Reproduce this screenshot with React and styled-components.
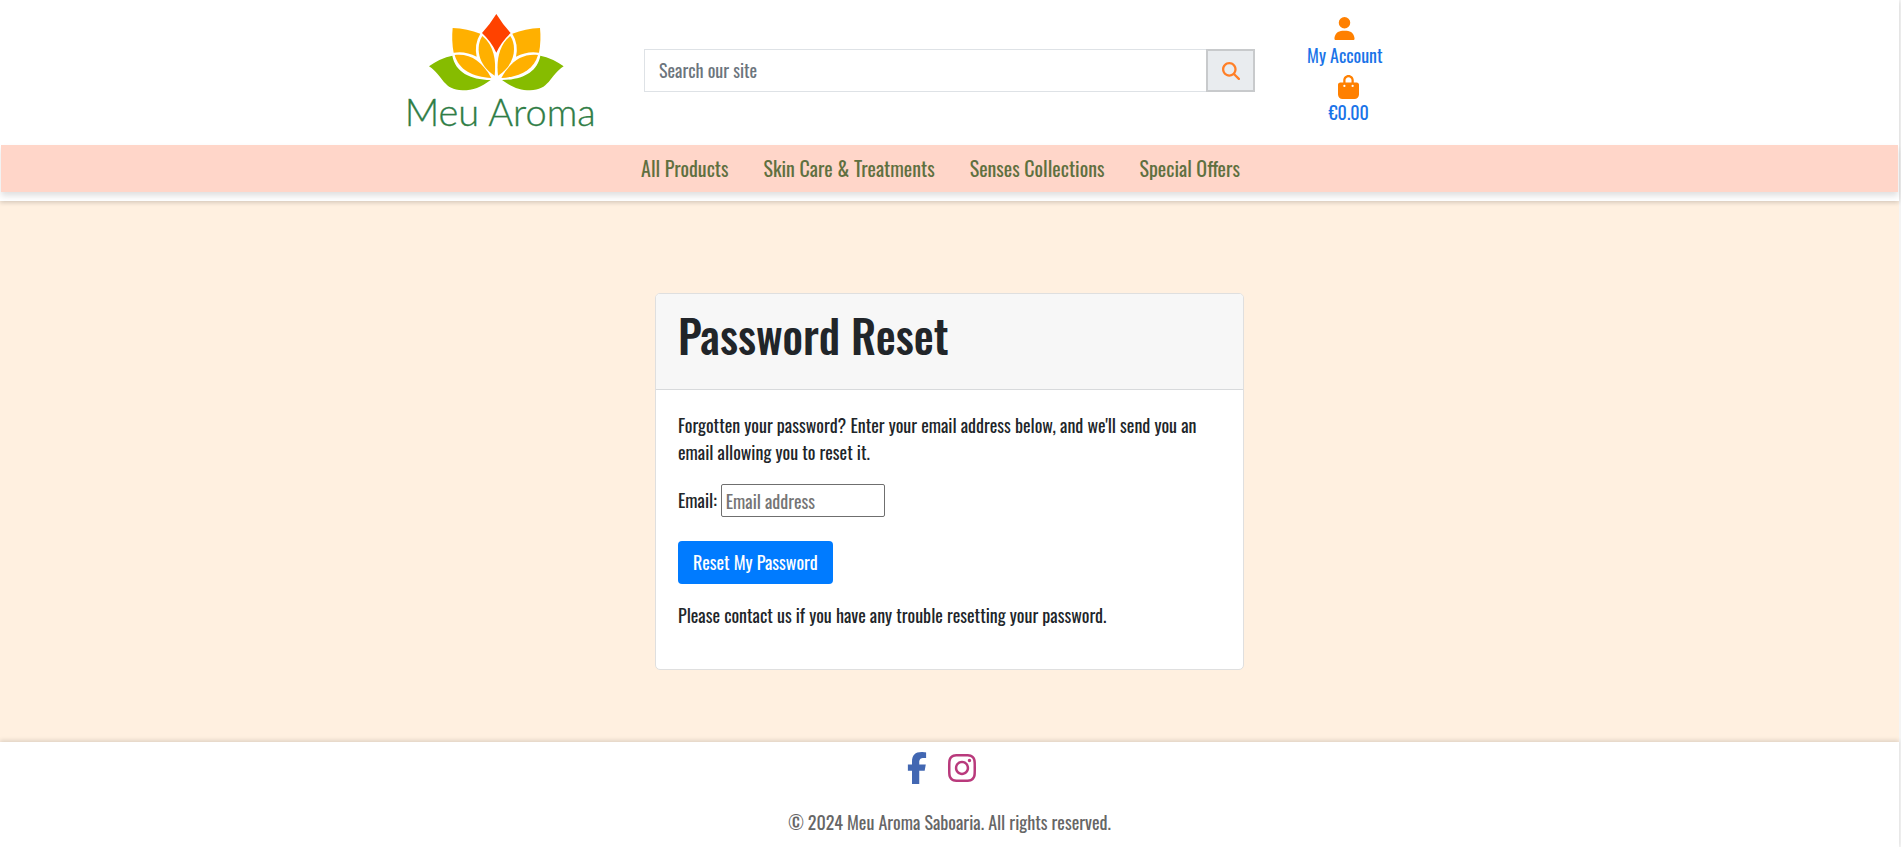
import React from "react";
import styled, { createGlobalStyle } from "styled-components";
import { FaUser, FaFacebookF, FaInstagram } from "react-icons/fa6";

const GlobalStyle = createGlobalStyle`
  *, *::before, *::after { box-sizing: border-box; }
  html { overflow-x: hidden; }
  body {
    margin: 0;
    background: #fff0e0;
    color: #212529;
    font-family: Oswald, "Liberation Sans Narrow", "Liberation Sans", sans-serif;
    font-size: 18px;
    line-height: 27px;
  }
  a { text-decoration: none; }
`;

const Page = styled.div`
  display: flex;
  flex-direction: column;
  min-height: 100vh;
  border-right: 2px solid #f4f4f4;
`;

const Header = styled.header`
  position: relative;
  padding-bottom: 9px;
  background: #fff;
  box-shadow: 0 2px 4px rgba(0, 0, 0, 0.15);
`;

const TopBar = styled.div`
  display: grid;
  grid-template-columns: repeat(3, 1fr);
  align-items: center;
  padding-bottom: 4px;
`;

const LogoLink = styled.a`
  display: block;
  justify-self: end;
  height: 141px;
  padding-right: 23px;
`;

const SearchForm = styled.form`
  display: flex;
  height: 43px;
  margin: 0 11px;
`;

const SearchInput = styled.input`
  flex: 1;
  min-width: 0;
  padding: 0 14px;
  border: 1px solid #dee2e6;
  border-right: 0;
  color: #212529;
  font: inherit;
  &::placeholder { color: #6c757d; opacity: 1; }
`;

const SearchButton = styled.button`
  display: flex;
  align-items: center;
  justify-content: center;
  width: 49px;
  padding: 0;
  border: 2px solid #c8cacc;
  background: #e9ecef;
  color: #ff7f27;
`;

const AccountLinks = styled.div`
  display: flex;
  flex-direction: column;
  align-items: center;
  justify-self: start;
  gap: 4px;
  padding: 2px 0 0 41px;
`;

const AccountLink = styled.a`
  display: flex;
  flex-direction: column;
  align-items: center;
  color: #1a73e8;
  line-height: ${(p) => (p.$tight ? "27px" : "31px")};
  padding-left: ${(p) => (p.$tight ? "8px" : "0")};
  svg { color: #ff8000; }
`;

const Nav = styled.nav`
  display: flex;
  justify-content: center;
  gap: 35px;
  height: 47px;
  margin: 0 1px;
  padding-right: 18px;
  background: #ffd6c9;
  box-shadow: 0 4px 6px rgba(0, 0, 0, 0.12);
`;

const NavLink = styled.a`
  color: #5f7040;
  font-size: 20px;
  line-height: 47px;
`;

const Main = styled.main`
  flex: 1;
  display: grid;
  grid-template-columns: repeat(3, 1fr);
  padding: 92px 0 72px;
`;

const Card = styled.section`
  grid-column: 2;
  align-self: start;
  margin: 0 22px;
  border: 1px solid #dfdfdf;
  border-radius: 5px;
  background: #fff;
  overflow: hidden;
`;

const CardHeader = styled.div`
  padding: 13px 22px 27px;
  border-bottom: 1px solid #d8dadc;
  background: #f7f7f7;
`;

const Title = styled.h1`
  margin: 0;
  font-size: 45px;
  font-weight: 500;
  line-height: 55px;
`;

const CardBody = styled.div`
  padding: 22px 22px 40px;
`;

const Paragraph = styled.p`
  margin: 0;
`;

const Field = styled.div`
  display: flex;
  align-items: center;
  gap: 4px;
  margin: 18px 0 24px;
`;

const EmailInput = styled.input`
  width: 164px;
  height: 33px;
  padding: 0 4px;
  border: 1px solid #6f6f6f;
  border-radius: 2px;
  font: inherit;
  &::placeholder { color: #757575; opacity: 1; }
`;

const SubmitButton = styled.button`
  display: block;
  height: 43px;
  margin-bottom: 18px;
  padding: 0 15px;
  border: 0;
  border-radius: 4px;
  background: #007bff;
  color: #fff;
  font: inherit;
`;

const Footer = styled.footer`
  display: flex;
  flex-direction: column;
  align-items: center;
  gap: 25px;
  padding: 9px 0 12px;
  background: #fff;
  box-shadow: 0 -2px 4px rgba(0, 0, 0, 0.12);
  color: #666;
`;

const Social = styled.div`
  display: flex;
  align-items: center;
  gap: 13px;
  height: 33px;
  padding-right: 20px;
`;

const SocialLink = styled.a`
  display: flex;
  color: ${(p) => p.$color};
`;

const HalfFlower = () => (
  <>
    <path fill="#ffb000" d="M188 84 Q232 86 271 101 Q252 132 260 170 Q226 152 191 158 Q184 122 188 84Z" />
    <path fill="#ffb000" d="M277 108 C257 138 261 194 314 227 C319 182 312 136 277 108Z" />
    <path fill="#ffb000" d="M194 165 C242 160 276 184 304 234 C248 230 207 211 194 165Z" />
    <path fill="#86bc00" d="M117 199 Q151 174 187 167 C196 216 240 239 302 240 C272 262 250 271 218 271 C160 271 160 228 117 199Z" />
  </>
);

const Logo = () => (
  <svg width="220" height="141" viewBox="0 0 660 423" role="img" aria-label="Meu Aroma">
    <path fill="#ff4200" d="M319 42 Q338 73 362 99 Q334 125 319 158 Q304 125 276 99 Q300 73 319 42Z" />
    <HalfFlower />
    <g transform="translate(638 0) scale(-1 1)"><HalfFlower /></g>
    <text x="44" y="377" fill="#2f7d46" stroke="#2f7d46" fontFamily="Lato, 'Open Sans', sans-serif" fontWeight="300" fontSize="114">Meu Aroma</text>
  </svg>
);

const BagIcon = () => (
  <svg width="21" height="24" viewBox="0 0 448 512" fill="currentColor" aria-hidden="true">
    <path d="M160 112c0-35.300 28.700-64 64-64s64 28.700 64 64v48H160V112zm-48 48H48c-26.500 0-48 21.500-48 48V416c0 53 43 96 96 96H352c53 0 96-43 96-96V208c0-26.500-21.500-48-48-48H336V112C336 50.100 285.900 0 224 0S112 50.100 112 112v48zm24 48a24 24 0 1 1 0 48 24 24 0 1 1 0-48zm152 24a24 24 0 1 1 48 0 24 24 0 1 1-48 0z" />
  </svg>
);

const SearchIcon = () => (
  <svg width="18" height="18" viewBox="0 0 512 512" fill="currentColor" aria-hidden="true">
    <path d="M416 208c0 45.900-14.900 88.300-40 122.700L502.600 457.400c12.500 12.500 12.500 32.800 0 45.300s-32.800 12.500-45.300 0L330.700 376c-34.400 25.200-76.800 40-122.700 40C93.100 416 0 322.900 0 208S93.100 0 208 0S416 93.100 416 208zM208 352a144 144 0 1 0 0-288 144 144 0 1 0 0 288z" />
  </svg>
);

const navItems = ["All Products", "Skin Care & Treatments", "Senses Collections", "Special Offers"];

export default function App() {
  return (
    <>
      <GlobalStyle />
      <Page>
        <Header>
          <TopBar>
            <LogoLink href="#"><Logo /></LogoLink>
            <SearchForm>
              <SearchInput type="text" placeholder="Search our site" aria-label="Search our site" />
              <SearchButton type="button" aria-label="Search"><SearchIcon /></SearchButton>
            </SearchForm>
            <AccountLinks>
              <AccountLink href="#"><FaUser size={23} />My Account</AccountLink>
              <AccountLink href="#" $tight><BagIcon />€0.00</AccountLink>
            </AccountLinks>
          </TopBar>
          <Nav>
            {navItems.map((item) => <NavLink key={item} href="#">{item}</NavLink>)}
          </Nav>
        </Header>
        <Main>
          <Card>
            <CardHeader><Title>Password Reset</Title></CardHeader>
            <CardBody>
              <Paragraph>
                Forgotten your password? Enter your email address below, and we'll send you an email allowing you to reset it.
              </Paragraph>
              <Field>
                <label htmlFor="email">Email:</label>
                <EmailInput id="email" type="email" placeholder="Email address" />
              </Field>
              <SubmitButton type="button">Reset My Password</SubmitButton>
              <Paragraph>Please contact us if you have any trouble resetting your password.</Paragraph>
            </CardBody>
          </Card>
        </Main>
        <Footer>
          <Social>
            <SocialLink href="#" $color="#4267b2" aria-label="Facebook"><FaFacebookF size={32} /></SocialLink>
            <SocialLink href="#" $color="#b93a7c" aria-label="Instagram"><FaInstagram size={32} /></SocialLink>
          </Social>
          <span>© 2024 Meu Aroma Saboaria. All rights reserved.</span>
        </Footer>
      </Page>
    </>
  );
}
